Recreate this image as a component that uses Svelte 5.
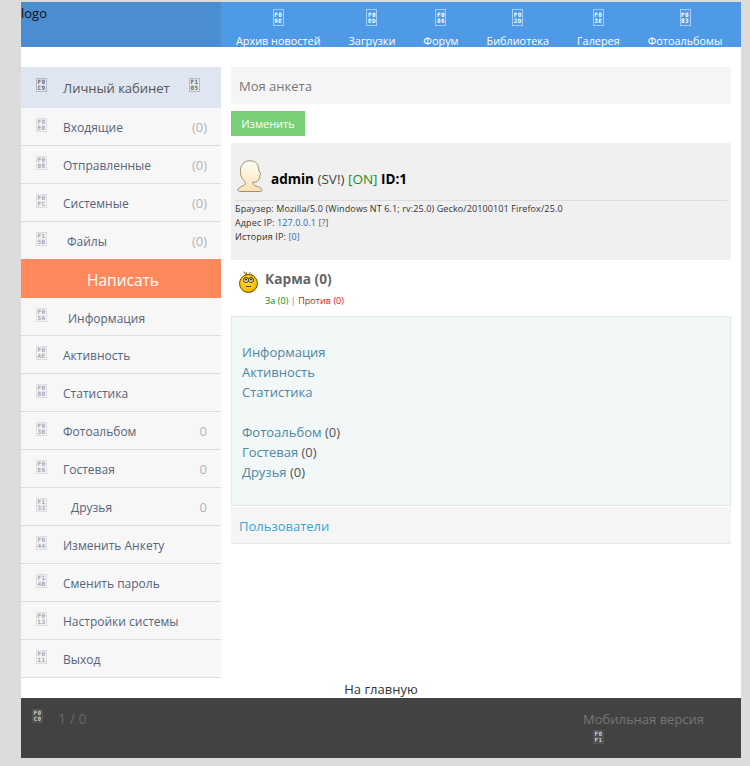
<script>
  const nav = [
    ['F0', '9E', 'Архив новостей'],
    ['F0', 'ED', 'Загрузки'],
    ['F0', '86', 'Форум'],
    ['F0', '2D', 'Библиотека'],
    ['F0', '3E', 'Галерея'],
    ['F0', '83', 'Фотоальбомы']
  ];

  const mailItems = [
    ['F0', 'E0', 'Входящие', '(0)', ''],
    ['F0', '08', 'Отправленные', '(0)', ''],
    ['F0', 'FC', 'Системные', '(0)', ''],
    ['F1', '5B', 'Файлы', '(0)', 'indent-small']
  ];

  const profileItems = [
    ['F0', '5A', 'Информация', '', 'indent-info'],
    ['F0', 'AE', 'Активность', '', ''],
    ['F0', '80', 'Статистика', '', ''],
    ['F0', '30', 'Фотоальбом', '0', ''],
    ['F0', 'E6', 'Гостевая', '0', ''],
    ['F1', '33', 'Друзья', '0', 'indent-friends'],
    ['F0', '44', 'Изменить Анкету', '', ''],
    ['F1', '4B', 'Сменить пароль', '', ''],
    ['F0', '13', 'Настройки системы', '', ''],
    ['F0', '11', 'Выход', '', '']
  ];
</script>

{#snippet tofu(a, b, cls = '')}
  <span class="tofu {cls}"><span>{a}</span><span>{b}</span></span>
{/snippet}

{#snippet sideRow(item)}
  <a class="side-row" href="#top">
    {@render tofu(item[0], item[1])}
    <span class="side-label {item[4]}">{item[2]}</span>
    {#if item[3]}<span class="count">{item[3]}</span>{/if}
  </a>
{/snippet}

<div class="page">
  <header class="top">
    <div class="logo">logo</div>
    <nav class="nav">
      {#each nav as n}
        <a class="nav-item" href="#top">
          {@render tofu(n[0], n[1], 'tofu-nav')}
          <span>{n[2]}</span>
        </a>
      {/each}
    </nav>
  </header>

  <div class="columns">
    <aside class="side">
      <div class="side-head">
        {@render tofu('F0', 'C9', 'tofu-head')}
        <span class="head-label">Личный кабинет</span>
        {@render tofu('F1', '05', 'tofu-head')}
      </div>
      {#each mailItems as item}
        {@render sideRow(item)}
      {/each}
      <a class="write" href="#top">Написать</a>
      {#each profileItems as item}
        {@render sideRow(item)}
      {/each}
    </aside>

    <main class="main">
      <div class="title">Моя анкета</div>
      <button class="edit">Изменить</button>

      <section class="user">
        <div class="user-name">
          <svg class="avatar" width="26" height="32" viewBox="0 0 26 32">
            <defs>
              <linearGradient id="skin" x1="0" y1="0" x2="0" y2="1">
                <stop offset="0" stop-color="#fffef8" />
                <stop offset="1" stop-color="#fbe0b0" />
              </linearGradient>
            </defs>
            <path
              d="M11 1C17 0 21 3 21.500 8L22 11L24 14.500L22.500 15.500L23 18L21.500 19C21.500 22 19 22.500 16 22C15.500 24 16.500 25 19 26C22 27 25 28 25 30C25 31 24 31.500 22 31.500L4 31.500C1.500 31.500.5 30.500 1 29C2 27 6 26 8 24.500C9 23.500 8.500 22 7 20.500C4 18 3 14 3.500 9.500C4 5 7 1.500 11 1Z"
              fill="url(#skin)"
              stroke="#9a9278"
              stroke-width="1"
            />
          </svg>
          <b>admin</b>&nbsp;<span class="sv">(SV!)</span>&nbsp;<span class="on">[ON]</span>&nbsp;<b>ID:1</b>
        </div>
        <div class="user-info">
          <div>Браузер: Mozilla/5.0 (Windows NT 6.1; rv:25.0) Gecko/20100101 Firefox/25.0</div>
          <div>Адрес IP: <a href="#top">127.0.0.1</a> <a class="hint" href="#top">[?]</a></div>
          <div>История IP: <a href="#top">[0]</a></div>
        </div>
      </section>

      <section class="karma">
        <svg class="smiley" width="21" height="22" viewBox="0 0 21 22">
          <defs>
            <radialGradient id="ball" cx="0.45" cy="0.4" r="0.65">
              <stop offset="0" stop-color="#ffe13a" />
              <stop offset="0.75" stop-color="#f5c000" />
              <stop offset="1" stop-color="#b88400" />
            </radialGradient>
          </defs>
          <path d="M8 4 5.500.5M10 4 12.500 1M12 4.500 14.500 3M9 4 8 1" stroke="#8a6420" stroke-width="1" fill="none" />
          <circle cx="10.500" cy="12.500" r="9" fill="url(#ball)" stroke="#6f5200" stroke-width="1" />
          <circle cx="8" cy="9" r="2.500" fill="#f7ecc0" stroke="#4a3800" stroke-width="1" />
          <circle cx="13" cy="9" r="2.500" fill="#f7ecc0" stroke="#4a3800" stroke-width="1" />
          <circle cx="8" cy="8.500" r="1" fill="#222" />
          <circle cx="13" cy="8.500" r="1" fill="#222" />
          <path d="M8 15.500h5" stroke="#5a4300" stroke-width="1" />
        </svg>
        <div>
          <div class="karma-title">Карма (0)</div>
          <div class="karma-votes"><span class="plus">За (0)</span> <span class="sep">|</span> <span class="minus">Против (0)</span></div>
        </div>
      </section>

      <section class="links">
        <div class="link-group">
          <div><a href="#top">Информация</a></div>
          <div><a href="#top">Активность</a></div>
          <div><a href="#top">Статистика</a></div>
        </div>
        <div class="link-group">
          <div><a href="#top">Фотоальбом</a> (0)</div>
          <div><a href="#top">Гостевая</a> (0)</div>
          <div><a href="#top">Друзья</a> (0)</div>
        </div>
      </section>

      <div class="users"><a href="#top">Пользователи</a></div>
    </main>
  </div>

  <div class="home"><a href="#top">На главную</a></div>

  <footer class="foot">
    <div class="foot-left">
      {@render tofu('F0', 'C0', 'tofu-dark')}
      <span class="pages">1 / 0</span>
    </div>
    <div class="foot-right">
      <div>Мобильная версия</div>
      {@render tofu('F0', 'F1', 'tofu-dark')}
    </div>
  </footer>
</div>

<style>
  :global(body) {
    background: #dcdcdc;
    font-family: "Open Sans", "Noto Sans", sans-serif;
  }

  a {
    text-decoration: none;
    color: inherit;
  }

  .page {
    width: 720px;
    height: 756px;
    margin: 2px 0 0 21px;
    background: #fff;
    display: flex;
    flex-direction: column;
  }

  /* fallback glyph boxes, the page's icon font never loaded */
  .tofu {
    flex: none;
    display: inline-flex;
    flex-direction: column;
    align-items: center;
    justify-content: center;
    width: 11px;
    height: 14px;
    border: 1px solid #ddd;
    background: #f3f3f3;
    box-sizing: border-box;
    color: #a5a5a5;
    font: 700 6px/6px "DejaVu Sans Mono", monospace;
    letter-spacing: 0.4px;
  }

  .tofu-head {
    border-color: #b4b8c0;
    background: #e4e8f0;
    color: #666;
  }

  .tofu-nav {
    height: 17px;
    border-color: #a6cdf3;
    background: transparent;
    color: #fff;
  }

  .tofu-dark {
    border-color: #555;
    background: #4c4c4c;
    color: #ccc;
  }

  .top {
    display: flex;
    height: 45px;
    flex: none;
  }

  .logo {
    width: 200px;
    flex: none;
    background: #4a8dd1;
    color: #111;
    font-size: 13px;
    line-height: 23px;
  }

  .nav {
    flex: 1;
    display: flex;
    padding-left: 1px;
    background: #4f9ae6;
  }

  .nav-item {
    padding: 7px 14px 0;
    display: flex;
    flex-direction: column;
    align-items: center;
    gap: 7px;
    color: #fff;
    font-size: 10.850px;
    line-height: 15px;
    white-space: nowrap;
  }

  .columns {
    display: flex;
    gap: 10px;
    padding-top: 20px;
    flex: none;
  }

  .side {
    width: 200px;
    flex: none;
    display: flex;
    flex-direction: column;
    font-size: 12px;
  }

  .side-head {
    height: 41px;
    background: #dfe5f1;
    padding: 11px 0 0 15px;
    display: flex;
    box-sizing: border-box;
    color: #555;
    font-size: 13px;
    line-height: 20px;
  }

  .head-label {
    margin-left: 16px;
    width: 126px;
  }

  .side-row {
    height: 38px;
    box-sizing: border-box;
    background: #f7f7f7;
    border-bottom: 1px solid #ddd;
    padding: 11px 14px 0 15px;
    display: flex;
    color: #56647a;
    line-height: 18px;
  }

  .side-row .tofu {
    margin-top: -1px;
  }

  .side-label {
    margin-left: 16px;
    flex: 1;
  }

  .indent-small {
    margin-left: 20px;
  }

  .indent-info {
    margin-left: 21px;
    padding-top: 1px;
  }

  .indent-friends {
    margin-left: 24px;
  }

  .count {
    color: #b4b4b4;
    font-size: 13px;
    line-height: 17px;
  }

  .write {
    height: 39px;
    background: #ff895d;
    color: #fff;
    font-size: 15.500px;
    line-height: 43px;
    padding-left: 4px;
    text-align: center;
    margin-top: -1px;
  }

  .main {
    width: 500px;
    flex: none;
  }

  .title {
    height: 37px;
    background: #f5f5f5;
    padding-left: 8px;
    color: #777;
    font-size: 13px;
    line-height: 39px;
  }

  .edit {
    display: block;
    margin-top: 7px;
    width: 74px;
    height: 25px;
    padding: 0;
    border: 0;
    background: #77cf77;
    color: #fff;
    font: 11px "Open Sans", sans-serif;
  }

  .user {
    margin-top: 7px;
    height: 117px;
    background: #f0f0f0;
    padding: 16px 4px 0;
    box-sizing: border-box;
    font-size: 9px;
    color: #333;
    letter-spacing: 0.12px;
  }

  .user-name {
    display: flex;
    align-items: flex-end;
    height: 42px;
    box-sizing: border-box;
    padding-left: 2px;
    padding-bottom: 12px;
    border-bottom: 1px solid #ddd;
    font-size: 13.500px;
    line-height: 18px;
    color: #000;
    letter-spacing: 0;
  }

  .avatar {
    margin: 0 8px -4px 0;
  }

  .sv {
    color: #444;
  }

  .on {
    color: #1c8c1c;
  }

  .user-info {
    line-height: 14px;
    padding-top: 1px;
  }

  .user-info a {
    color: #2c68b0;
  }

  .user-info a.hint {
    color: #555;
  }

  .karma {
    height: 56px;
    display: flex;
    padding: 11px 0 0 7px;
    box-sizing: border-box;
    gap: 6px;
  }

  .karma-title {
    font-size: 13.700px;
    font-weight: 700;
    color: #666;
    line-height: 16px;
  }

  .karma-votes {
    margin-top: 8px;
    font-size: 9px;
    letter-spacing: 0.05px;
    line-height: 12px;
  }

  .plus {
    color: #0a8a0a;
  }

  .minus {
    color: #e01010;
  }

  .sep {
    color: #888;
  }

  .links {
    height: 190px;
    box-sizing: border-box;
    background: #f2f7f8;
    border: 1px solid #dfe8ea;
    padding: 25px 10px 0;
    font-size: 13px;
    line-height: 20px;
    color: #555;
  }

  .links a {
    color: #4f87a3;
  }

  .link-group + .link-group {
    margin-top: 20px;
  }

  .users {
    height: 37px;
    margin-top: 1px;
    background: #f5f5f5;
    border-bottom: 1px solid #e6e6e6;
    box-sizing: border-box;
    padding-left: 8px;
    font-size: 13px;
    line-height: 39px;
    color: #35a7d8;
  }

  .home {
    height: 20px;
    flex: none;
    text-align: center;
    font-size: 13px;
    line-height: 22px;
    color: #333;
  }

  .foot {
    height: 60px;
    flex: none;
    background: #424242;
    color: #747474;
    font-size: 13px;
    display: flex;
    justify-content: space-between;
  }

  .foot-left {
    padding: 11px 0 0 11px;
    display: flex;
    gap: 15px;
    line-height: 20px;
  }

  .pages {
    font-size: 14px;
    color: #666;
  }

  .foot-right {
    width: 158px;
    padding-top: 12px;
    line-height: 18px;
  }

  .foot-right .tofu {
    display: flex;
    margin: 2px 0 0 10px;
  }
</style>
